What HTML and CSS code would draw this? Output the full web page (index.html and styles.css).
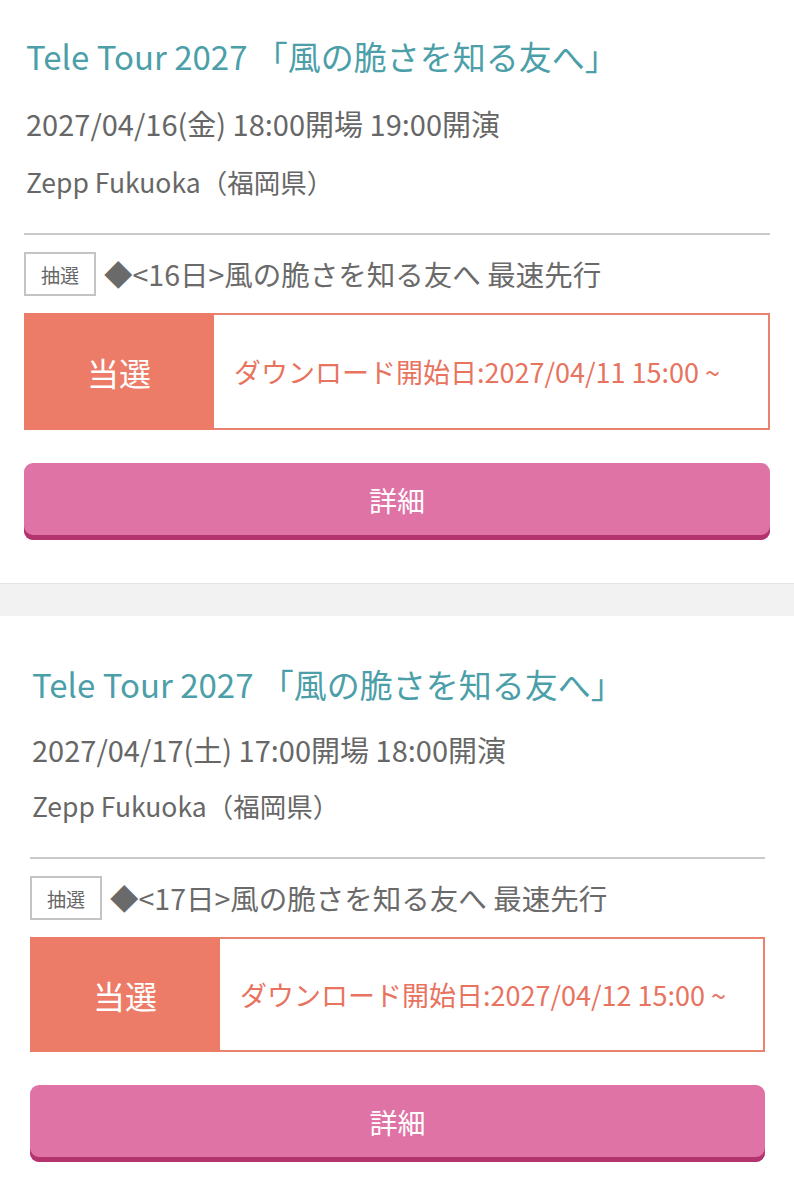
FILE: index.html
```html
<!DOCTYPE html>
<html lang="ja">
<head>
<meta charset="utf-8">
<link rel="stylesheet" href="styles.css">
</head>
<body>
<section class="card">
  <h2 class="title">Tele Tour 2027 「風の脆さを知る友へ」</h2>
  <p class="date">2027/04/16(金) 18:00開場 19:00開演</p>
  <p class="venue">Zepp Fukuoka（福岡県）</p>
  <hr class="divider">
  <div class="lottery">
    <span class="badge">抽選</span>
    <span class="lottery-name">◆&lt;16日&gt;風の脆さを知る友へ 最速先行</span>
  </div>
  <div class="status">
    <div class="status-label">当選</div>
    <div class="status-text">ダウンロード開始日:2027/04/11 15:00 ~</div>
  </div>
  <button class="detail">詳細</button>
</section>
<div class="band"></div>
<section class="card card-second">
  <h2 class="title">Tele Tour 2027 「風の脆さを知る友へ」</h2>
  <p class="date">2027/04/17(土) 17:00開場 18:00開演</p>
  <p class="venue">Zepp Fukuoka（福岡県）</p>
  <hr class="divider">
  <div class="lottery">
    <span class="badge">抽選</span>
    <span class="lottery-name">◆&lt;17日&gt;風の脆さを知る友へ 最速先行</span>
  </div>
  <div class="status">
    <div class="status-label">当選</div>
    <div class="status-text">ダウンロード開始日:2027/04/12 15:00 ~</div>
  </div>
  <button class="detail">詳細</button>
</section>
</body>
</html>
```

FILE: styles.css
```css
* { box-sizing: border-box; }
html, body {
  margin: 0;
  padding: 0;
  background: #ffffff;
}
body {
  font-family: "Noto Sans CJK JP", "Noto Sans", sans-serif;
  color: #676767;
}
.card {
  display: flex;
  flex-direction: column;
  padding: 35px 24px 43px 24px;
}
.card-second {
  padding: 47px 29px 40px 30px;
}
.title {
  margin: 0;
  font-size: 33px;
  line-height: 42px;
  font-weight: 400;
  color: #4c9fa9;
  padding-left: 2px;
}
.date {
  margin: 28px 0 0 0;
  font-size: 29px;
  line-height: 36px;
  padding-left: 2px;
}
.venue {
  margin: 24px 0 0 0;
  font-size: 26.5px;
  line-height: 34px;
  padding-left: 2px;
}
.card-second .date {
  margin-top: 26px;
}
.card-second .venue {
  margin-top: 22px;
}
.divider {
  margin: 34px 0 0 0;
  border: 0;
  height: 2px;
  background: #c9c9c9;
}
.lottery {
  margin-top: 17px;
  display: flex;
  align-items: center;
  gap: 8px;
}
.badge {
  width: 72px;
  height: 44px;
  border: 2px solid #c4c4c4;
  display: flex;
  align-items: center;
  justify-content: center;
  font-size: 19px;
  color: #666666;
}
.lottery-name {
  font-size: 28.5px;
  line-height: 36px;
  color: #6a6a6a;
}
.status {
  margin-top: 17px;
  display: flex;
  height: 117px;
  border: 2px solid #ea8270;
}
.card-second .status {
  height: 115px;
}
.status-label {
  width: 190px;
  background: #ec7c68;
  color: #ffffff;
  font-size: 32px;
  display: flex;
  align-items: center;
  justify-content: center;
  margin: -2px 0 -2px -2px;
}
.status-text {
  flex: 1;
  display: flex;
  align-items: center;
  padding-left: 20px;
  font-size: 27px;
  color: #e8735f;
}
.detail {
  margin-top: 33px;
  height: 77px;
  border: 0;
  border-radius: 9px;
  background: #df73a5;
  box-shadow: inset 0 -5px 0 #b3336f;
  color: #ffffff;
  font-family: "Noto Sans CJK JP", "Noto Sans", sans-serif;
  font-size: 28px;
  padding: 0 0 4px 0;
}
.band {
  height: 33px;
  background: #f2f2f2;
  border-top: 1px solid #e3e3e3;
}
```
